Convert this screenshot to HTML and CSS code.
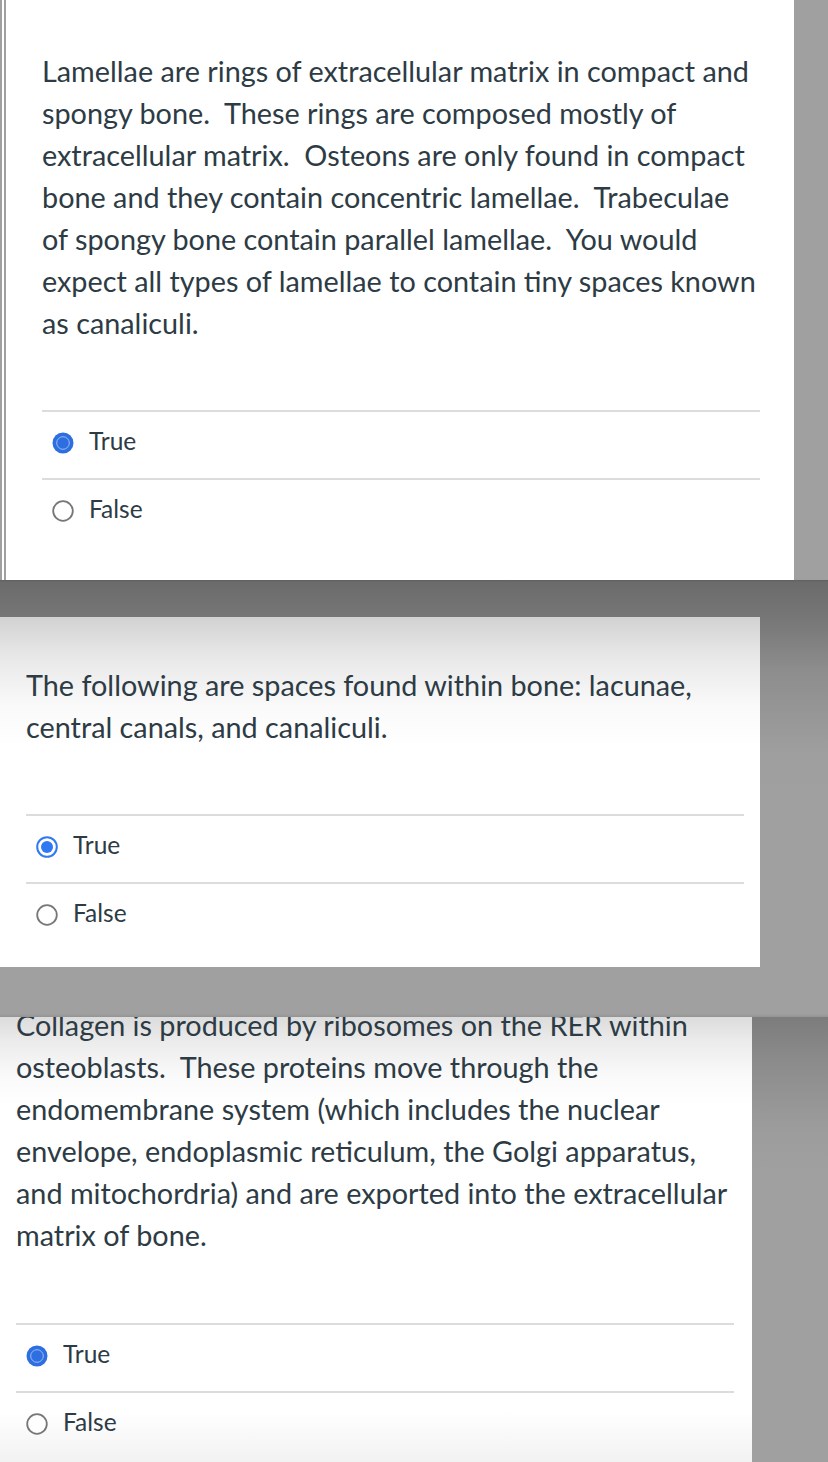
FILE: index.html
```html
<!DOCTYPE html>
<html>
<head>
<meta charset="utf-8">
<link rel="stylesheet" href="styles.css">
</head>
<body>
<section class="frame frame-one">
  <div class="panel panel-one">
    <p class="question">Lamellae are rings of extracellular matrix in compact and spongy bone.&nbsp; These rings are composed mostly of extracellular matrix.&nbsp; Osteons are only found in compact bone and they contain concentric lamellae.&nbsp; Trabeculae of spongy bone contain parallel lamellae.&nbsp; You would expect all types of lamellae to contain tiny spaces known as canaliculi.</p>
    <div class="answers">
      <div class="opt">
        <svg class="radio" viewBox="0 0 22 22"><circle cx="11" cy="11" r="10.5" fill="#2d6fe0"/><circle cx="11" cy="11" r="6.3" fill="none" stroke="#9cbcf2" stroke-width="1"/></svg>
        <span>True</span>
      </div>
      <div class="opt">
        <svg class="radio" viewBox="0 0 22 22"><circle cx="11" cy="11" r="9.8" fill="#fff" stroke="#777" stroke-width="1.8"/></svg>
        <span>False</span>
      </div>
    </div>
  </div>
  <div class="side side-one"></div>
</section>

<section class="frame frame-two">
  <div class="panel panel-two">
    <p class="question">The following are spaces found within bone: lacunae, central canals, and canaliculi.</p>
    <div class="answers">
      <div class="opt">
        <svg class="radio" viewBox="0 0 22 22"><circle cx="11" cy="11" r="9.8" fill="#fff" stroke="#3179f2" stroke-width="2"/><circle cx="11" cy="11" r="6" fill="#3179f2"/></svg>
        <span>True</span>
      </div>
      <div class="opt">
        <svg class="radio" viewBox="0 0 22 22"><circle cx="11" cy="11" r="9.8" fill="#fff" stroke="#777" stroke-width="1.8"/></svg>
        <span>False</span>
      </div>
    </div>
  </div>
</section>

<section class="frame frame-three">
  <div class="band"></div>
  <div class="row-three">
    <div class="panel panel-three">
      <p class="question clipped">Collagen is produced by ribosomes on the RER within osteoblasts.&nbsp; These proteins move through the endomembrane system (which includes the nuclear envelope, endoplasmic reticulum, the Golgi apparatus, and mitochordria) and are exported into the extracellular matrix of bone.</p>
      <div class="answers">
        <div class="opt">
          <svg class="radio" viewBox="0 0 22 22"><circle cx="11" cy="11" r="10.5" fill="#2d6fe0"/><circle cx="11" cy="11" r="6.3" fill="none" stroke="#9cbcf2" stroke-width="1"/></svg>
          <span>True</span>
        </div>
        <div class="opt">
          <svg class="radio" viewBox="0 0 22 22"><circle cx="11" cy="11" r="9.8" fill="#fff" stroke="#777" stroke-width="1.8"/></svg>
          <span>False</span>
        </div>
      </div>
    </div>
    <div class="side side-three"></div>
  </div>
</section>
</body>
</html>
```

FILE: styles.css
```css
html, body {
  margin: 0;
  padding: 0;
}
body {
  width: 828px;
  height: 1462px;
  overflow: hidden;
  background: #a0a0a0;
  font-family: Lato, "Open Sans", sans-serif;
  color: #2d3b45;
}
.frame {
  box-sizing: border-box;
}
.question {
  margin: 0;
  width: 717px;
  font-size: 28.8px;
  line-height: 42px;
}
.answers {
  width: 718px;
  margin-top: 66px;
}
.opt {
  display: flex;
  align-items: center;
  gap: 15px;
  border-top: 2px solid #dcdcdc;
  padding: 20px 0 25px 10px;
  height: 21px;
}
.opt span {
  font-size: 24.5px;
  line-height: 21px;
  position: relative;
  top: -2px;
}
.radio {
  width: 22px;
  height: 22px;
  flex: none;
}

/* frame one */
.frame-one {
  display: flex;
  height: 580px;
}
.panel-one {
  box-sizing: border-box;
  width: 794px;
  height: 580px;
  background: #fff;
  border-left: 6px double #a0a0a0;
  padding: 50px 0 0 36px;
}
.side-one {
  flex: 1;
  background: #a0a0a0;
}

/* frame two */
.frame-two {
  height: 387px;
  padding-top: 37px;
  background: linear-gradient(#5f5f5f 0, #6b6b6b 2px, #767676 37px, #8d8d8d 90px, #9e9e9e 170px, #a0a0a0 220px);
}
.panel-two {
  box-sizing: border-box;
  width: 760px;
  height: 350px;
  background: linear-gradient(#d2d2d2 0, #e8e8e8 40px, #fafafa 90px, #fff 130px);
  padding: 47px 0 0 26px;
}

/* frame three */
.frame-three {
  height: 495px;
}
.band {
  height: 50px;
  background: linear-gradient(#a0a0a0 0, #a0a0a0 47px, #939393 50px);
}
.row-three {
  display: flex;
  height: 445px;
}
.panel-three {
  box-sizing: border-box;
  width: 752px;
  height: 445px;
  overflow: hidden;
  background: linear-gradient(#dcdcdc 0, #ececec 25px, #fafafa 60px, #fff 90px, #fff 395px, #f2f2f2 445px);
  padding-left: 16px;
}
.clipped {
  margin-top: -13px;
}
.panel-three .answers {
  margin-top: 67px;
}
.side-three {
  flex: 1;
  background: linear-gradient(#7c7c7c 0, #8a8a8a 40px, #9c9c9c 110px, #a0a0a0 160px);
}
```
